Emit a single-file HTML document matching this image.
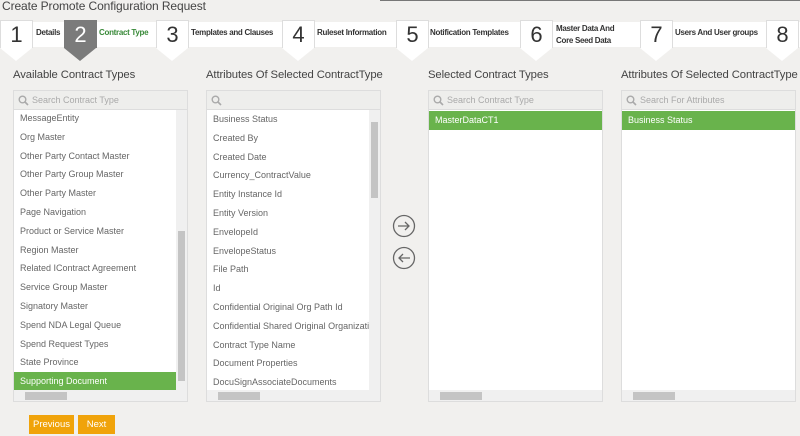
<!DOCTYPE html>
<html><head><style>
*{box-sizing:border-box;margin:0;padding:0}
body{width:800px;height:436px;background:#f1f0ee;font-family:"Liberation Sans",sans-serif;position:relative;overflow:hidden;color:#555}
.abs{position:absolute}
.title{left:2px;top:-1px;font-size:12px;color:#444;letter-spacing:-0.1px}
.topline{left:380px;top:0;width:420px;height:1px;background:#777}
.band{top:22px;height:25px;background:#fff;left:0;width:800px}
.step{position:absolute;top:20px;width:33px;height:28px;background:#fff;border:1px solid #ddd;border-bottom:none;font-size:22px;text-align:center;line-height:28px;color:#333}
.step:after{content:"";position:absolute;left:-1px;top:27px;border-left:16.5px solid transparent;border-right:16.5px solid transparent;border-top:13px solid #fff}
.step.on{background:#7b7b7b;color:#fff;border-color:#7b7b7b}
.step.on:after{border-top-color:#7b7b7b}
.lbl{position:absolute;top:28px;font-size:8px;font-weight:bold;color:#333;letter-spacing:-0.3px;white-space:nowrap}
.h{position:absolute;top:69px;font-size:11.3px;color:#444;white-space:nowrap;letter-spacing:-0.1px}
.panel{position:absolute;top:90px;width:175px;height:312px;background:#fff;border:1px solid #ddd}
.search{height:19px;background:#eeeeec;border-bottom:1px solid #ddd;font-size:9px;color:#aaa;line-height:19px;padding-left:18px;position:relative}
.search svg{position:absolute;left:4px;top:4px}
.item{height:18.8px;line-height:18.8px;font-size:9px;padding-left:6px;color:#666;white-space:nowrap;overflow:hidden}
.sel{background:#69b34c;color:#fff}
.vs{position:absolute;right:0;top:19px;width:11px;height:281px;background:#f0f0f0}
.hs{position:absolute;left:0;bottom:0;width:100%;height:11px;background:#f0f0f0}
.thumbv{position:absolute;left:2px;width:7px;background:#c4c4c4}
.thumbh{position:absolute;left:11px;top:2px;width:42px;height:8px;background:#c4c4c4}
.btn{position:absolute;top:415px;height:19px;background:#f0a30a;color:#fff;font-size:9.5px;text-align:center;line-height:19px}
</style></head><body>
<div class="abs topline"></div>
<div class="abs title">Create Promote Configuration Request</div>
<div class="abs band"></div>
<div class="step" style="left:0">1</div><div class="lbl" style="left:36px">Details</div>
<div class="step on" style="left:64px">2</div><div class="lbl" style="left:99px;color:#3a8a3a">Contract Type</div>
<div class="step" style="left:156px">3</div><div class="lbl" style="left:191px">Templates and Clauses</div>
<div class="step" style="left:282px">4</div><div class="lbl" style="left:317px">Ruleset Information</div>
<div class="step" style="left:396px">5</div><div class="lbl" style="left:430px">Notification Templates</div>
<div class="step" style="left:520px">6</div><div class="lbl" style="left:556px;top:23px;line-height:12px">Master Data And<br>Core Seed Data</div>
<div class="step" style="left:640px">7</div><div class="lbl" style="left:675px">Users And User groups</div>
<div class="step" style="left:766px">8</div>

<div class="h" style="left:13px">Available Contract Types</div>
<div class="h" style="left:206px">Attributes Of Selected ContractType</div>
<div class="h" style="left:428px">Selected Contract Types</div>
<div class="h" style="left:621px">Attributes Of Selected ContractType</div>

<svg width="0" height="0" style="position:absolute"><defs><g id="mg"><circle cx="4.5" cy="4.5" r="3.3" fill="none" stroke="#aaa" stroke-width="1.4"/><line x1="7" y1="7" x2="10" y2="10" stroke="#aaa" stroke-width="1.6"/></g></defs></svg>

<div class="panel" style="left:13px">
<div class="search"><svg width="11" height="11"><use href="#mg"/></svg>Search Contract Type</div>
<div class="item" style="margin-top:-1px">MessageEntity</div><div class="item">Org Master</div><div class="item">Other Party Contact Master</div><div class="item">Other Party Group Master</div><div class="item">Other Party Master</div><div class="item">Page Navigation</div><div class="item">Product or Service Master</div><div class="item">Region Master</div><div class="item">Related IContract Agreement</div><div class="item">Service Group Master</div><div class="item">Signatory Master</div><div class="item">Spend NDA Legal Queue</div><div class="item">Spend Request Types</div><div class="item">State Province</div><div class="item sel" style="margin-right:11px">Supporting Document</div>
<div class="vs"><div class="thumbv" style="top:121px;height:150px"></div></div>
<div class="hs"><div class="thumbh"></div></div>
</div>

<div class="panel" style="left:206px">
<div class="search"><svg width="11" height="11"><use href="#mg"/></svg></div>
<div class="item" style="margin-top:0">Business Status</div><div class="item">Created By</div><div class="item">Created Date</div><div class="item">Currency_ContractValue</div><div class="item">Entity Instance Id</div><div class="item">Entity Version</div><div class="item">EnvelopeId</div><div class="item">EnvelopeStatus</div><div class="item">File Path</div><div class="item">Id</div><div class="item">Confidential Original Org Path Id</div><div class="item">Confidential Shared Original Organizatio</div><div class="item">Contract Type Name</div><div class="item">Document Properties</div><div class="item">DocuSignAssociateDocuments</div>
<div class="vs"><div class="thumbv" style="top:12px;height:76px"></div></div>
<div class="hs"><div class="thumbh"></div></div>
</div>

<svg class="abs" style="left:392px;top:213px" width="26" height="60">
<circle cx="12" cy="13" r="10.5" fill="none" stroke="#666" stroke-width="1.3"/>
<path d="M6 13H17M13 9L17 13L13 17" fill="none" stroke="#666" stroke-width="1.3"/>
<circle cx="12" cy="45" r="10.5" fill="none" stroke="#666" stroke-width="1.3"/>
<path d="M18 45H7M11 41L7 45L11 49" fill="none" stroke="#666" stroke-width="1.3"/>
</svg>

<div class="panel" style="left:428px">
<div class="search"><svg width="11" height="11"><use href="#mg"/></svg>Search Contract Type</div>
<div class="item sel" style="margin-top:1px">MasterDataCT1</div>
<div class="hs"><div class="thumbh"></div></div>
</div>

<div class="panel" style="left:621px">
<div class="search"><svg width="11" height="11"><use href="#mg"/></svg>Search For Attributes</div>
<div class="item sel" style="margin-top:1px">Business Status</div>
<div class="hs"><div class="thumbh"></div></div>
</div>

<div class="btn" style="left:29px;width:45px">Previous</div>
<div class="btn" style="left:78px;width:37px">Next</div>
</body></html>
